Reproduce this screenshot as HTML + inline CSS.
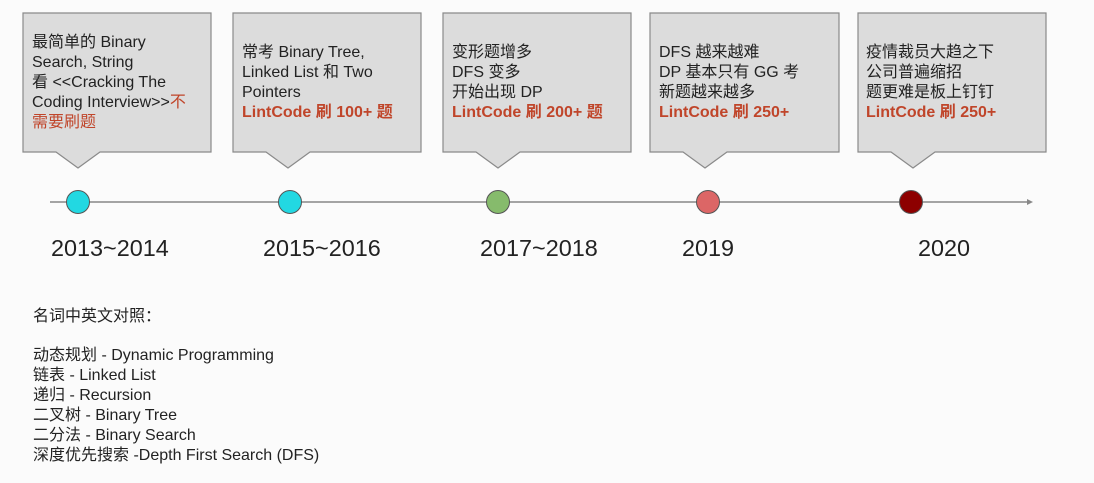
<!DOCTYPE html>
<html><head><meta charset="utf-8"><style>
body{margin:0;width:1094px;height:483px;background:#fbfbfb;position:relative;overflow:hidden;font-family:"Liberation Sans","Noto Sans CJK SC",sans-serif;color:#222}
.t{position:absolute;font-size:16px;line-height:20px;white-space:nowrap}
.r{color:#c0452a;font-weight:bold}
.y{position:absolute;font-size:23.4px;top:235px}
.c{position:absolute;width:22px;height:22px;border-radius:50%;border:1.5px solid #555;top:190px}
</style></head><body>
<svg width="1094" height="483" style="position:absolute;left:0;top:0">
<g fill="#dcdcdc" stroke="#8a8a8a" stroke-width="1.2">
<path d="M23 13H211V152H100L78 168L56 152H23Z"/>
<path d="M233 13H421V152H310L288 168L266 152H233Z"/>
<path d="M443 13H631V152H520L498 168L476 152H443Z"/>
<path d="M650 13H839V152H727L705 168L683 152H650Z"/>
<path d="M858 13H1046V152H935L913 168L891 152H858Z"/>
</g>
<line x1="50" y1="202" x2="1030" y2="202" stroke="#888" stroke-width="1.5"/>
<path d="M1027 199L1033 202L1027 205Z" fill="#888"/>
</svg>
<div class="c" style="left:66px;background:#22d8e2"></div>
<div class="c" style="left:278px;background:#22d8e2"></div>
<div class="c" style="left:486px;background:#86bb6c"></div>
<div class="c" style="left:696px;background:#dc6666"></div>
<div class="c" style="left:899px;background:#8d0000"></div>
<div class="t" style="left:32px;top:33px">最简单的 Binary<br>Search, String<br>看 &lt;&lt;Cracking The<br>Coding Interview&gt;&gt;<span class="r" style="font-weight:normal">不<br>需要刷题</span></div>
<div class="t" style="left:242px;top:43px">常考 Binary Tree,<br>Linked List 和 Two<br>Pointers<br><span class="r">LintCode 刷 100+ 题</span></div>
<div class="t" style="left:452px;top:43px">变形题增多<br>DFS 变多<br>开始出现 DP<br><span class="r">LintCode 刷 200+ 题</span></div>
<div class="t" style="left:659px;top:43px">DFS 越来越难<br>DP 基本只有 GG 考<br>新题越来越多<br><span class="r">LintCode 刷 250+</span></div>
<div class="t" style="left:866px;top:43px">疫情裁员大趋之下<br>公司普遍缩招<br>题更难是板上钉钉<br><span class="r">LintCode 刷 250+</span></div>
<div class="y" style="left:51px">2013~2014</div>
<div class="y" style="left:263px">2015~2016</div>
<div class="y" style="left:480px">2017~2018</div>
<div class="y" style="left:682px">2019</div>
<div class="y" style="left:918px">2020</div>
<div class="t" style="left:33px;top:307px">名词中英文对照：</div>
<div class="t" style="left:33px;top:346px">动态规划 - Dynamic Programming<br>链表 - Linked List<br>递归 - Recursion<br>二叉树 - Binary Tree<br>二分法 - Binary Search<br>深度优先搜索 -Depth First Search (DFS)</div>
</body></html>
